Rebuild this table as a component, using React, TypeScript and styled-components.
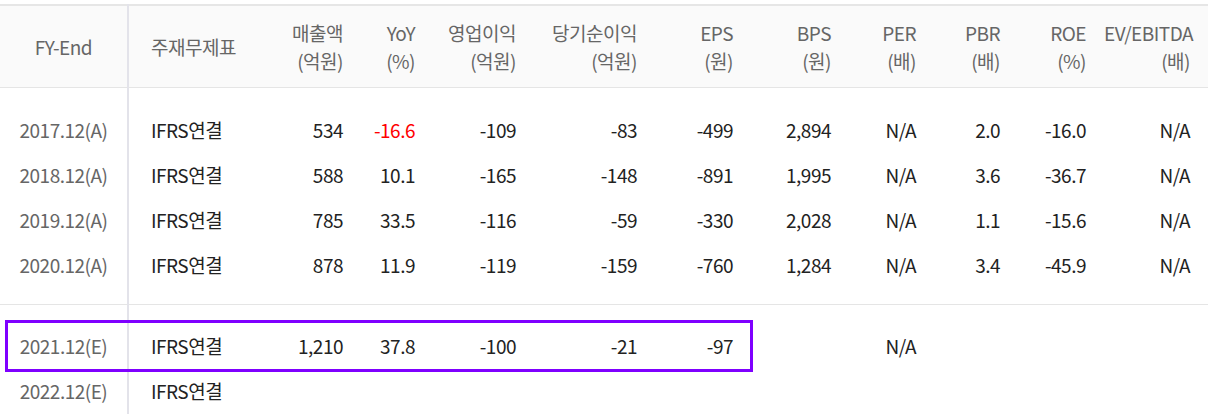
import styled, { createGlobalStyle } from "styled-components";

const GlobalStyle = createGlobalStyle`
  body {
    margin: 0;
    background: #fff;
    font-family: "Noto Sans CJK KR", "Noto Sans", sans-serif;
  }
`;

const Wrap = styled.div`
  position: relative;
  width: 1208px;
  padding-top: 4px;
`;

const Table = styled.table`
  width: 1208px;
  border-collapse: collapse;
  table-layout: fixed;
  font-size: 19px;
  letter-spacing: -0.5px;
`;

const HeadRow = styled.tr`
  background: #fafafa;
  border-top: 2px solid #e6e6e6;
  border-bottom: 1px solid #e5e5e5;
`;

const Th = styled.th<{ $first?: boolean; $left?: boolean }>`
  height: 81px;
  padding: ${(p) => (p.$first ? "0" : p.$left ? "0 0 0 22px" : "0 18px 0 0")};
  text-align: ${(p) => (p.$first ? "center" : p.$left ? "left" : "right")};
  font-weight: 400;
  color: #666;
  line-height: 28px;
  vertical-align: middle;
  white-space: nowrap;
  border-right: ${(p) => (p.$first ? "2px solid #e3e3ea" : "none")};
`;

const Td = styled.td<{ $first?: boolean; $left?: boolean; $red?: boolean }>`
  height: 45px;
  padding: ${(p) => (p.$first ? "0" : p.$left ? "0 0 0 22px" : "0 18px 0 0")};
  text-align: ${(p) => (p.$first ? "center" : p.$left ? "left" : "right")};
  color: ${(p) => (p.$first ? "#666" : p.$red ? "#f00" : "#222")};
  line-height: 24px;
  white-space: nowrap;
  vertical-align: middle;
  border-right: ${(p) => (p.$first ? "2px solid #e3e3ea" : "none")};
`;

const Spacer = styled.tr<{ $h: number; $line?: boolean }>`
  height: ${(p) => p.$h}px;
  border-bottom: ${(p) => (p.$line ? "1px solid #e5e5e5" : "none")};
  td {
    padding: 0;
  }
  td:first-child {
    border-right: 2px solid #e3e3ea;
  }
`;

const Highlight = styled.div`
  position: absolute;
  left: 5px;
  top: 320px;
  width: 742px;
  height: 46px;
  border: 3px solid #7f00ff;
  pointer-events: none;
`;

const widths = [128, 120, 113, 72, 101, 121, 96, 98, 85, 84, 86, 104];

const headers: [string, string?][] = [
  ["FY-End"],
  ["주재무제표"],
  ["매출액", "(억원)"],
  ["YoY", "(%)"],
  ["영업이익", "(억원)"],
  ["당기순이익", "(억원)"],
  ["EPS", "(원)"],
  ["BPS", "(원)"],
  ["PER", "(배)"],
  ["PBR", "(배)"],
  ["ROE", "(%)"],
  ["EV/EBITDA", "(배)"],
];

const actual = [
  ["2017.12(A)", "IFRS연결", "534", "-16.6", "-109", "-83", "-499", "2,894", "N/A", "2.0", "-16.0", "N/A"],
  ["2018.12(A)", "IFRS연결", "588", "10.1", "-165", "-148", "-891", "1,995", "N/A", "3.6", "-36.7", "N/A"],
  ["2019.12(A)", "IFRS연결", "785", "33.5", "-116", "-59", "-330", "2,028", "N/A", "1.1", "-15.6", "N/A"],
  ["2020.12(A)", "IFRS연결", "878", "11.9", "-119", "-159", "-760", "1,284", "N/A", "3.4", "-45.9", "N/A"],
];

const estimate = [
  ["2021.12(E)", "IFRS연결", "1,210", "37.8", "-100", "-21", "-97", "", "N/A", "", "", ""],
  ["2022.12(E)", "IFRS연결", "", "", "", "", "", "", "", "", "", ""],
];

const Row = ({ cells }: { cells: string[] }) => (
  <tr>
    {cells.map((c, i) => (
      <Td key={i} $first={i === 0} $left={i === 1} $red={i === 3 && c === "-16.6"}>
        {c}
      </Td>
    ))}
  </tr>
);

const App = () => {
  return (
    <Wrap>
      <GlobalStyle />
      <Table>
        <colgroup>
          {widths.map((w, i) => (
            <col key={i} style={{ width: w }} />
          ))}
        </colgroup>
        <thead>
          <HeadRow>
            {headers.map(([a, b], i) => (
              <Th key={i} $first={i === 0} $left={i === 1}>
                {a}
                {b ? (
                  <>
                    <br />
                    {b}
                  </>
                ) : null}
              </Th>
            ))}
          </HeadRow>
        </thead>
        <tbody>
          <Spacer $h={20}>
            <td />
            <td colSpan={11} />
          </Spacer>
          {actual.map((r) => (
            <Row key={r[0]} cells={r} />
          ))}
          <Spacer $h={17} $line>
            <td />
            <td colSpan={11} />
          </Spacer>
          <Spacer $h={19}>
            <td />
            <td colSpan={11} />
          </Spacer>
          {estimate.map((r, i) => (
            <Row key={r[0] + i} cells={r} />
          ))}
        </tbody>
      </Table>
      <Highlight />
    </Wrap>
  );
};

export default App;
